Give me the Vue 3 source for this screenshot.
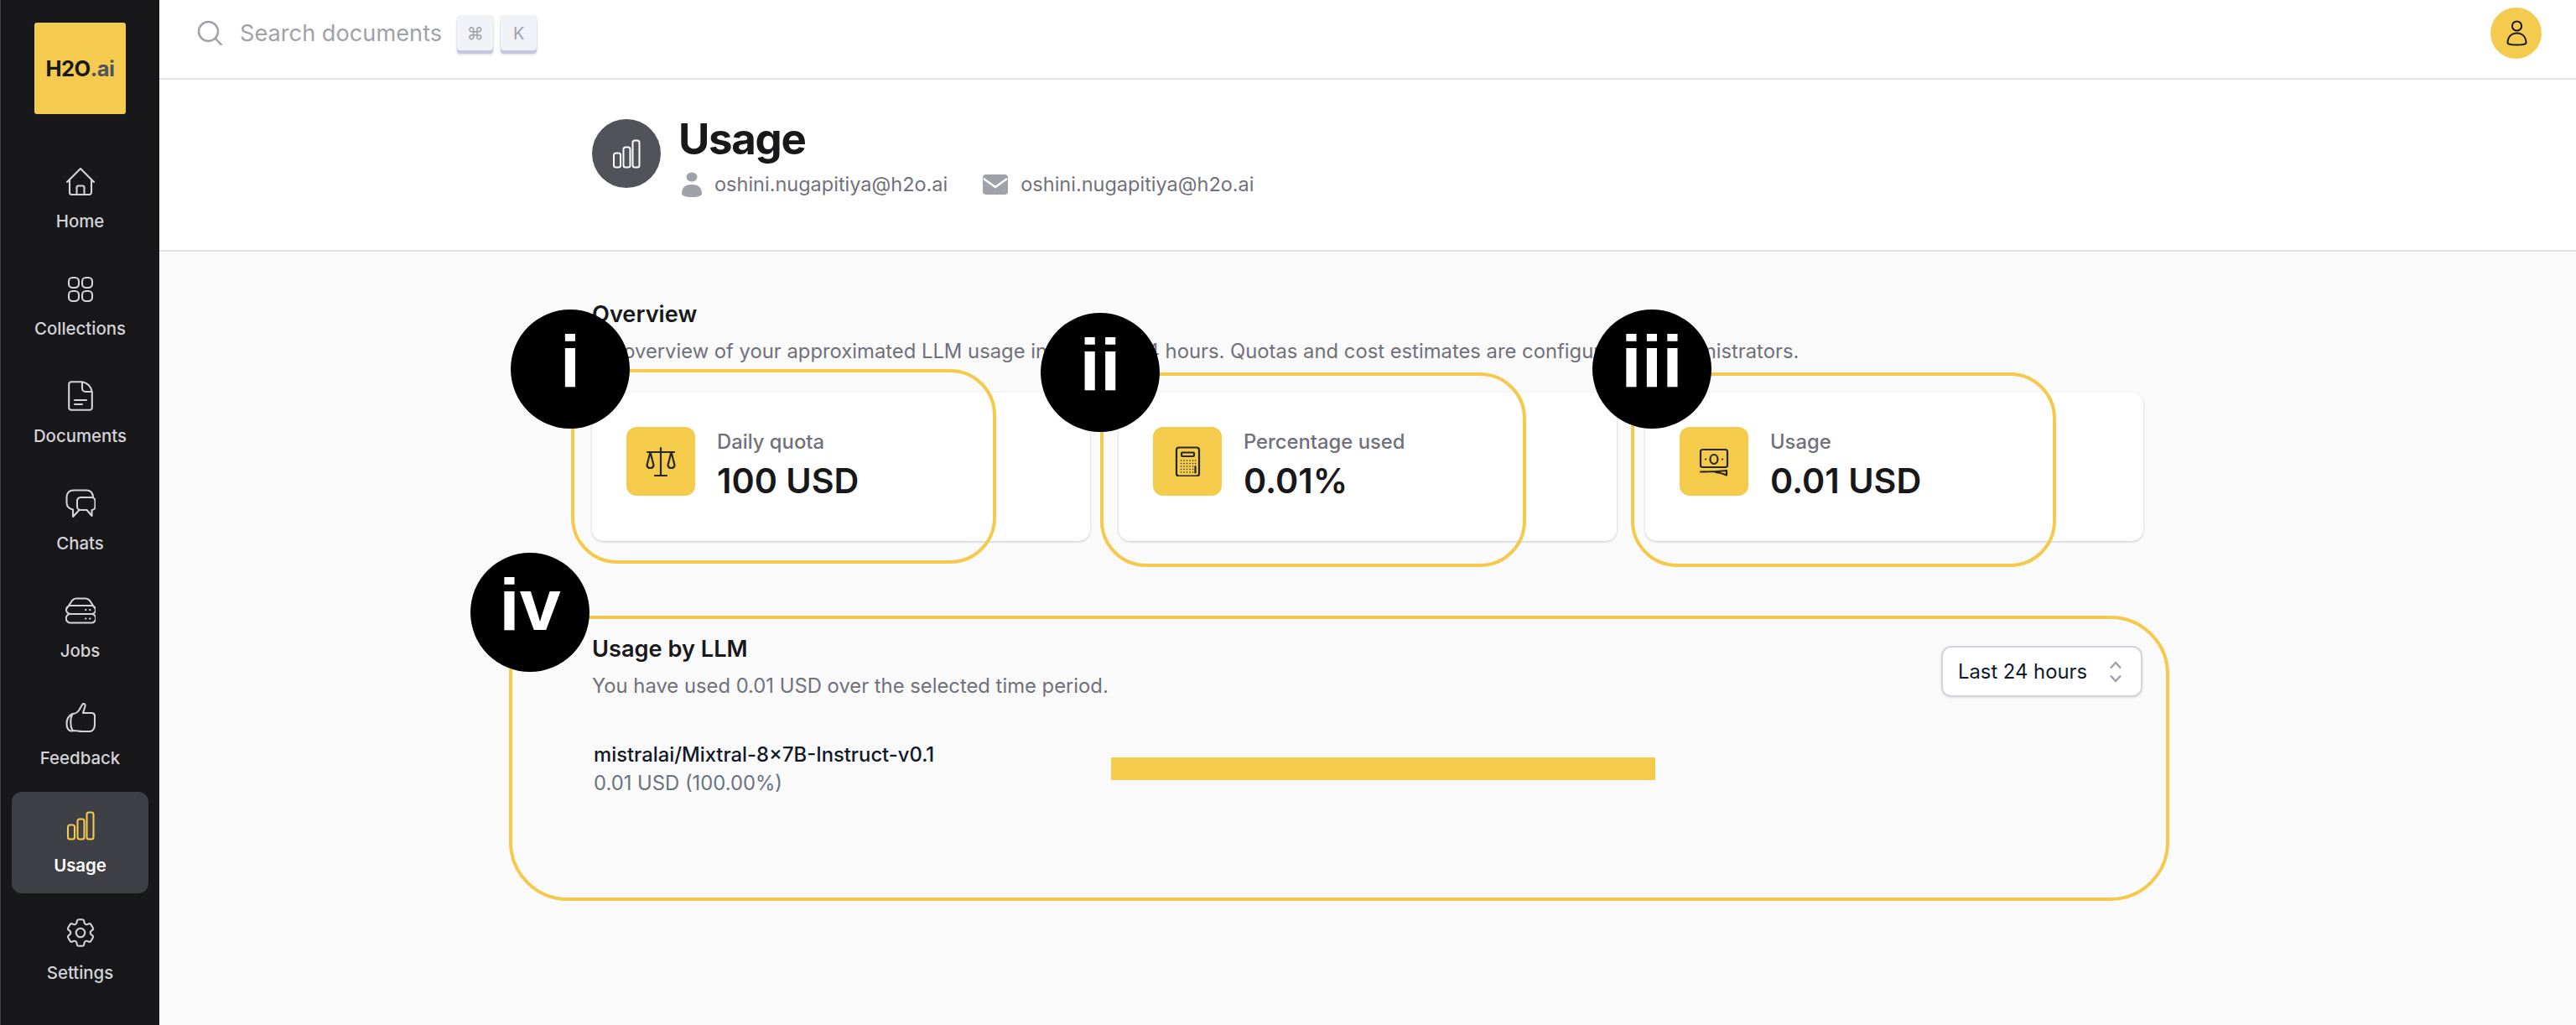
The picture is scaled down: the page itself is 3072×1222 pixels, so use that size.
<template>
  <div class="app">
    <!-- 侧边栏 -->
    <aside class="sidebar">
      <div class="logo"><span class="logo-dark">H2O</span><span class="logo-grey">.ai</span></div>
      <nav class="nav">
        <a v-for="item in navItems" :key="item.label" class="nav-item" :class="{ active: item.active }">
          <svg class="nav-icon" :viewBox="item.box || '0 0 36 36'" width="36" height="36" fill="none">
            <path :d="item.d" />
          </svg>
          <span>{{ item.label }}</span>
        </a>
      </nav>
    </aside>

    <div class="main">
      <!-- 顶栏 -->
      <header class="topbar">
        <svg class="search-icon" width="30" height="30" viewBox="0 0 30 30" fill="none">
          <circle cx="13.5" cy="13.5" r="11.5" />
          <path d="M22 22l7 7.5" />
        </svg>
        <span class="search-text">Search documents</span>
        <kbd class="key">⌘</kbd>
        <kbd class="key">K</kbd>
        <div class="avatar">
          <svg width="61" height="61" viewBox="0 0 61 61" fill="none">
            <circle cx="31.5" cy="22" r="5.6" />
            <path d="M20.5 42.5C20.5 35 25 30.5 31.5 30.5S42.5 35 42.5 42.5C42.5 43.5 38 44.5 31.5 44.5S20.5 43.5 20.5 42.5z" />
          </svg>
        </div>
      </header>

      <!-- 页面标题 -->
      <section class="page-head">
        <div class="page-head-inner">
          <div class="head-icon">
            <svg width="36" height="36" viewBox="0 0 36 36" fill="none"><path :d="barsPath" /></svg>
          </div>
          <div>
            <h1 class="head-title">Usage</h1>
            <div class="head-meta">
              <span class="meta-item">
                <svg width="24" height="30" viewBox="0 0 24 30"><ellipse cx="12" cy="6" rx="6.5" ry="5.6" /><path d="M0 26C0 18 5 15 12 15s12 3 12 11c0 2.500-5 4-12 4S0 28.500 0 26z" /></svg>
                oshini.nugapitiya@h2o.ai
              </span>
              <span class="meta-item">
                <svg width="30" height="24" viewBox="0 0 30 24"><rect width="30" height="24" rx="4" /><path d="M1 5l14 10L29 5" fill="none" stroke="#fff" stroke-width="2.400" /></svg>
                oshini.nugapitiya@h2o.ai
              </span>
            </div>
          </div>
        </div>
      </section>

      <main class="content">
        <h2 class="section-title">Overview</h2>
        <p class="section-sub">An overview of your approximated LLM usage in the past 24 hours. Quotas and cost estimates are configured by administrators.</p>

        <div class="cards">
          <div v-for="card in cards" :key="card.label" class="card">
            <div class="card-icon">
              <svg width="36" height="36" viewBox="0 0 36 36" fill="none">
                <path :d="card.d" />
                <path v-if="card.fine" class="fine" :d="card.fine" />
              </svg>
            </div>
            <div>
              <div class="card-label">{{ card.label }}</div>
              <div class="card-value">{{ card.value }}</div>
            </div>
          </div>
        </div>

        <div class="llm-head">
          <div>
            <h2 class="section-title">Usage by LLM</h2>
            <p class="section-sub">You have used 0.01 USD over the selected time period.</p>
          </div>
          <div class="select">
            <span>Last 24 hours</span>
            <svg width="16" height="26" viewBox="0 0 16 26" fill="none"><path d="M2 8.500l6-6.500 6 6.500M2 17.500l6 6.500 6-6.500" /></svg>
          </div>
        </div>

        <div class="llm-row">
          <div class="llm-info">
            <div class="llm-name">mistralai/Mixtral-8×7B-Instruct-v0.1</div>
            <div class="llm-cost">0.01 USD (100.00%)</div>
          </div>
          <div class="llm-bar"></div>
        </div>
      </main>
    </div>

    <!-- 标注层 -->
    <div v-for="box in marks" :key="box.id" class="mark-box" :class="box.id"></div>
    <div v-for="dot in dots" :key="dot.text" class="mark-dot" :class="dot.cls">{{ dot.text }}</div>
  </div>
</template>

<script setup>
const bar = (x, y, w, h, r) =>
  `M${x + r} ${y}h${w - 2 * r}a${r} ${r} 0 0 1 ${r} ${r}v${h - 2 * r}a${r} ${r} 0 0 1 ${-r} ${r}h${2 * r - w}a${r} ${r} 0 0 1 ${-r} ${-r}v${2 * r - h}a${r} ${r} 0 0 1 ${r} ${-r}z`

const barsPath = bar(3, 17.500, 8, 17, 2.500) + bar(14.500, 10.500, 8, 24, 2.500) + bar(25.500, 2.500, 8, 32, 2.500)

const gear = 'M9.594 3.94c.09-.542.56-.94 1.11-.94h2.593c.55 0 1.02.398 1.11.94l.213 1.281c.063.374.313.686.645.87.074.04.147.083.22.127.325.196.72.257 1.075.124l1.217-.456a1.125 1.125 0 0 1 1.37.49l1.296 2.247a1.125 1.125 0 0 1-.26 1.431l-1.003.827c-.293.241-.438.613-.43.992a7.723 7.723 0 0 1 0 .255c-.008.378.137.75.43.991l1.004.827c.424.35.534.955.26 1.43l-1.298 2.247a1.125 1.125 0 0 1-1.369.491l-1.217-.456c-.355-.133-.75-.072-1.076.124a6.47 6.47 0 0 1-.22.128c-.331.183-.581.495-.644.869l-.213 1.281c-.09.543-.56.94-1.11.94h-2.594c-.55 0-1.019-.398-1.11-.94l-.213-1.281c-.062-.374-.312-.686-.644-.87a6.52 6.52 0 0 1-.22-.127c-.325-.196-.72-.257-1.076-.124l-1.217.456a1.125 1.125 0 0 1-1.369-.49l-1.297-2.247a1.125 1.125 0 0 1 .26-1.431l1.004-.827c.292-.24.437-.613.43-.991a6.932 6.932 0 0 1 0-.255c.007-.38-.138-.751-.43-.992l-1.004-.827a1.125 1.125 0 0 1-.26-1.43l1.297-2.247a1.125 1.125 0 0 1 1.37-.491l1.216.456c.356.133.751.072 1.076-.124.072-.044.146-.086.22-.128.332-.183.582-.495.644-.869l.214-1.28zM15 12a3 3 0 1 1-6 0 3 3 0 0 1 6 0z'

const navItems = [
  { label: 'Home', d: 'M2 19L18 3l16 16M5 16.500V31.500a2.500 2.500 0 0 0 2.500 2.500h21a2.500 2.500 0 0 0 2.500-2.500V16.500M13.500 34V25.500a2 2 0 0 1 2-2h5a2 2 0 0 1 2 2V34' },
  { label: 'Collections', d: bar(4, 5, 12, 12, 4.500) + bar(20, 5, 12, 12, 4.500) + bar(4, 21, 12, 12, 4.500) + bar(20, 21, 12, 12, 4.500) },
  { label: 'Documents', d: 'M7 1.200h13c6 1 11 6 11.800 12V32a2.800 2.800 0 0 1-2.800 2.800H7A2.800 2.800 0 0 1 4.200 32V4A2.800 2.800 0 0 1 7 1.200zM20 1.200V9a4 4 0 0 0 4 4h7.800M11 23h14M11 28h9' },
  { label: 'Chats', d: 'M33 10.500C32.500 5 30 2.500 25 2.500H10C4.500 2.500 1.500 5.500 1.500 11v6c0 4.500 2.500 7.500 7.500 8.500V34l7.500-8M18 11h13a4.500 4.500 0 0 1 4.500 4.500V22a4 4 0 0 1-4 4v7l-6-7h-7.500a4 4 0 0 1-4-4v-6.500A4.500 4.500 0 0 1 18 11z' },
  { label: 'Jobs', d: 'M6 22h25a5 5 0 0 1 0 10.500H6A5 5 0 0 1 6 22zM6 12h25a5 5 0 0 1 0 10H6a5 5 0 0 1 0-10zM2 15l6-9q2-2.500 5-2.500h11q3 0 5 2.500l6 9M24 17h.5M29 17h.5M24 27.500h.5M29 27.500h.5' },
  { label: 'Feedback', d: 'M8.500 13C4 15 1.500 20 1.500 25c0 5 2.500 8.500 5.500 8.500L10 33c4 0 6 1 10 1h9c3 0 6-3 6-8V16c0-2.500-1.500-4-4-4H21l2.500-8C24 1.500 22 0 20.500 1.500L16 9c-2 3-6 4-7.500 4zM8.500 13c-3 5-3 15 0 20' },
  { label: 'Usage', d: barsPath, active: true },
  { label: 'Settings', d: gear, box: '1.700 1.700 20.600 20.600' },
]

// 计算器按键的点阵
const keyDots = [17, 20.500, 24, 27.500, 31]
  .flatMap((y) => [10.500, 14, 17.500, 21, 24.500].map((x) => `M${x} ${y}h.1`))
  .join('')

const cards = [
  {
    label: 'Daily quota',
    value: '100 USD',
    d: 'M18 2v32M11 35h14M2 7h32M5.500 7L1.500 22.500a4 4 0 0 0 4 3.500 4 4 0 0 0 4-3.500zM30.500 7l-4 15.500a4 4 0 0 0 4 3.500 4 4 0 0 0 4-3.500z',
  },
  {
    label: 'Percentage used',
    value: '0.01%',
    d: bar(5, 1.500, 27, 34, 3) + bar(11, 7.500, 15, 4.500, 1) + 'M27.500 24v7.500',
    fine: keyDots + 'M27.500 17h.1M27.500 20.500h.1',
  },
  {
    label: 'Usage',
    value: '0.01 USD',
    d: bar(2, 4, 32, 21, 2.500) + 'M22.500 15.500a4.500 5.500 0 1 1-9 0 4.500 5.500 0 0 1 9 0zM8 15.500h.1M28 15.500h.1M2 30.500c6 0 24-.5 31-1.500v5.500c-4-2-9-3-13-3.500',
  },
]

const marks = [{ id: 'box-1' }, { id: 'box-2' }, { id: 'box-3' }, { id: 'box-4' }]
const dots = [
  { text: 'i', cls: 'dot-1' },
  { text: 'ii', cls: 'dot-2' },
  { text: 'iii', cls: 'dot-3' },
  { text: 'iv', cls: 'dot-4' },
]
</script>

<style>
html, body {
  margin: 0;
  background: #fafafa;
}
</style>

<style scoped>
.app {
  position: relative;
  display: flex;
  height: 1222px;
  overflow: hidden;
  background: #fafafa;
  font-family: Inter, "Noto Sans", sans-serif;
  color: #18181b;
}

/* 侧边栏 */
.sidebar {
  flex: none;
  width: 190px;
  box-sizing: border-box;
  background: #18181b;
  border-left: 1px solid #3f3f46;
  padding-top: 27px;
}

.logo {
  width: 109px;
  height: 109px;
  margin-left: 40px;
  border-radius: 3px;
  background: #f5cb4f;
  display: flex;
  align-items: center;
  justify-content: center;
  font-size: 25.5px;
  font-weight: 700;
  letter-spacing: -0.5px;
}

.logo-dark {
  color: #18181b;
}

.logo-grey {
  color: #52525b;
}

.nav {
  display: flex;
  flex-direction: column;
  gap: 7px;
  margin-top: 40px;
  padding: 0 13px;
}

.nav-item {
  height: 121px;
  box-sizing: border-box;
  padding-top: 22px;
  border-radius: 12px;
  display: flex;
  flex-direction: column;
  align-items: center;
  gap: 17px;
  color: #d4d4d8;
  font-size: 20.4px;
  line-height: 26px;
  font-weight: 500;
}

.nav-icon path {
  stroke: currentColor;
  stroke-width: 2.100;
  stroke-linecap: round;
  stroke-linejoin: round;
  vector-effect: non-scaling-stroke;
}

.nav-item.active {
  background: #3f3f46;
  color: #fff;
  font-weight: 600;
}

.nav-item.active .nav-icon {
  color: #f5cb4f;
}

/* 顶栏 */
.main {
  flex: 1;
  min-width: 0;
}

.topbar {
  height: 95px;
  box-sizing: border-box;
  background: #fff;
  border-bottom: 2px solid #e4e4e7;
  display: flex;
  align-items: center;
  padding: 0 41px 0 45px;
}

.search-icon {
  margin-top: -16px;
}

.search-icon circle,
.search-icon path {
  stroke: #a1a1aa;
  stroke-width: 2.500;
  stroke-linecap: round;
}

.search-text {
  margin: -14px 0 0 21px;
  font-size: 27.2px;
  line-height: 36px;
  color: #a1a1aa;
}

.key {
  width: 43px;
  height: 41px;
  box-sizing: border-box;
  margin: -14px 0 0 9px;
  border-radius: 4px;
  background: #f1f2f7;
  box-shadow: 0 4px 0 #c6c6dc, 0 5px 3px rgba(120, 120, 160, 0.3), 0 0 2px rgba(120, 120, 160, 0.35);
  display: flex;
  align-items: center;
  justify-content: center;
  font-family: Inter, "DejaVu Sans", sans-serif;
  font-size: 20px;
  color: #a1a1aa;
}

.search-text + .key {
  margin-left: 18px;
}

.avatar {
  margin: -15px 0 0 auto;
  width: 61px;
  height: 61px;
  border-radius: 50%;
  background: #f5cb4f;
}

.avatar circle,
.avatar path {
  stroke: #18181b;
  stroke-width: 2;
}

/* 页面标题 */
.page-head {
  height: 205px;
  box-sizing: border-box;
  background: #fff;
  border-bottom: 2px solid #e4e4e7;
  padding-top: 47px;
}

.page-head-inner {
  width: 1850px;
  margin: 0 auto;
  display: flex;
  gap: 21px;
}

.head-icon {
  width: 82px;
  height: 82px;
  border-radius: 50%;
  background: #52525b;
  display: flex;
  align-items: center;
  justify-content: center;
}

.head-icon path {
  stroke: #fff;
  stroke-width: 2;
}

.head-title {
  margin: -5px 0 0;
  font-size: 51px;
  line-height: 58px;
  font-weight: 700;
  letter-spacing: -1.3px;
}

.head-meta {
  display: flex;
  gap: 42px;
  margin-top: 7px;
  padding-left: 4px;
}

.meta-item {
  display: flex;
  align-items: center;
  gap: 15px;
  font-size: 23.5px;
  line-height: 36px;
  color: #71717a;
}

.meta-item svg {
  fill: #a1a1aa;
}

/* 内容 */
.content {
  width: 1850px;
  margin: 0 auto;
  padding-top: 60px;
}

.section-title {
  margin: 0;
  font-size: 27.2px;
  line-height: 30px;
  font-weight: 600;
}

.section-sub {
  margin: 11px 0 0;
  font-size: 23.8px;
  line-height: 36px;
  color: #71717a;
}

.cards {
  display: grid;
  grid-template-columns: repeat(3, 594px);
  gap: 34px;
  margin-top: 31px;
}

.card {
  height: 177px;
  box-sizing: border-box;
  background: #fff;
  border-radius: 14px;
  box-shadow: 0 1px 3px rgba(0, 0, 0, 0.2);
  padding: 41px 41px 0;
  display: flex;
  gap: 26px;
}

.card-icon {
  width: 82px;
  height: 82px;
  border-radius: 12px;
  background: #f4cb4b;
  display: flex;
  align-items: center;
  justify-content: center;
}

.card-icon path {
  stroke: #27272a;
  stroke-width: 2.200;
  stroke-linecap: round;
  stroke-linejoin: round;
}

.card-icon path.fine {
  stroke-width: 1.500;
}

.card-label {
  font-size: 23.8px;
  line-height: 36px;
  font-weight: 500;
  color: #71717a;
}

.card-value {
  margin-top: 3px;
  font-size: 41.3px;
  line-height: 50px;
  font-weight: 600;
}

.llm-head {
  display: flex;
  justify-content: space-between;
  align-items: flex-start;
  margin-top: 114px;
}

.select {
  width: 240px;
  height: 61px;
  box-sizing: border-box;
  margin: 11px 1px 0 0;
  padding: 0 22px 0 18px;
  background: #fff;
  border: 2px solid #d1d5db;
  border-radius: 12px;
  box-shadow: 0 1px 3px rgba(0, 0, 0, 0.1);
  display: flex;
  align-items: center;
  justify-content: space-between;
  font-size: 23.8px;
  color: #111827;
}

.select path {
  stroke: #9ca3af;
  stroke-width: 2.500;
}

.llm-row {
  display: flex;
  align-items: center;
  margin-top: 46px;
  padding-left: 2px;
}

.llm-info {
  width: 617px;
}

.llm-name {
  font-size: 23.8px;
  line-height: 36px;
  font-weight: 500;
  color: #111827;
}

.llm-cost {
  font-size: 23.8px;
  line-height: 32px;
  color: #6b7280;
}

.llm-bar {
  width: 649px;
  height: 27px;
  background: #f4cb4b;
}

/* 标注层 */
.mark-box {
  position: absolute;
  box-sizing: border-box;
  border: 4px solid #f5c94c;
}

.box-1 {
  left: 681px;
  top: 440px;
  width: 507px;
  height: 232px;
  border-radius: 55px;
}

.box-2 {
  left: 1312px;
  top: 444px;
  width: 508px;
  height: 232px;
  border-radius: 55px;
}

.box-3 {
  left: 1945px;
  top: 444px;
  width: 507px;
  height: 232px;
  border-radius: 55px;
}

.box-4 {
  left: 607px;
  top: 734px;
  width: 1980px;
  height: 340px;
  border-radius: 70px;
}

.mark-dot {
  position: absolute;
  width: 142px;
  height: 142px;
  box-sizing: border-box;
  padding-bottom: 18px;
  border-radius: 50%;
  background: #000;
  color: #fff;
  display: flex;
  align-items: center;
  justify-content: center;
  font-family: "Liberation Sans", Arial, sans-serif;
  font-size: 88px;
  font-weight: 700;
  line-height: 1;
}

.dot-1 {
  left: 609px;
  top: 369px;
}

.dot-2 {
  left: 1241px;
  top: 373px;
}

.dot-3 {
  left: 1899px;
  top: 369px;
}

.dot-4 {
  left: 561px;
  top: 659px;
}
</style>
